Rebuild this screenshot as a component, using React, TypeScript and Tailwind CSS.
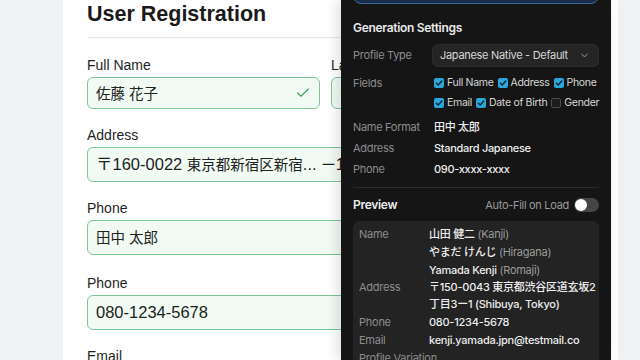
import React from "react";
import { Check, ChevronDown } from "lucide-react";

function Label({ children }: { children: React.ReactNode }) {
  return <div className="text-[14px] leading-[20px] text-[#1f1f1f]">{children}</div>;
}

function Field({ h, children, check }: { h: string; children?: React.ReactNode; check?: boolean }) {
  return (
    <div
      className={`${h} mt-[2px] flex items-center rounded-[6px] border border-[#7cc596] bg-[#f1fbf4] pl-[8px] pr-[8px] text-[16.5px] text-[#222] whitespace-nowrap overflow-hidden`}
    >
      <div className="flex-1 overflow-hidden whitespace-nowrap">{children}</div>
      {check && <Check size={16} strokeWidth={2} className="text-[#4aa96c] shrink-0" />}
    </div>
  );
}

function Cjk({ children }: { children: React.ReactNode }) {
  return <span className="text-[14.5px]">{children}</span>;
}

function Box({ on }: { on: boolean }) {
  return on ? (
    <span className="w-[10px] h-[10px] rounded-[2px] bg-[#2aa8dc] flex items-center justify-center shrink-0">
      <svg width="8" height="8" viewBox="0 0 8 8">
        <path d="M1.3 4.2 L3.2 6 L6.8 2" stroke="#0f2230" strokeWidth="1.4" fill="none" strokeLinecap="round" strokeLinejoin="round" />
      </svg>
    </span>
  ) : (
    <span className="w-[10px] h-[10px] rounded-[2px] border border-[#4a4a4a] bg-[#1b1b1b] shrink-0" />
  );
}

function CB({ on, label }: { on: boolean; label: string }) {
  return (
    <span className="flex items-center gap-[3px] whitespace-nowrap">
      <Box on={on} />
      <span>{label}</span>
    </span>
  );
}

function SRow({ label, value }: { label: string; value: string }) {
  return (
    <div className="h-[21px] flex items-center whitespace-nowrap">
      <div className="w-[81px] shrink-0 text-[#8c8c8c]">{label}</div>
      <div className="text-[#ededed] font-medium">{value}</div>
    </div>
  );
}

export default function App() {
  return (
    <div className="relative w-[640px] h-[360px] overflow-hidden bg-[#f0f1f3] flex font-[family-name:'Liberation_Sans','Noto_Sans_CJK_JP',sans-serif]">
      <div className="w-[63px] shrink-0" />
      <div className="w-[555px] shrink-0 h-full bg-white px-6">
        <div className="h-[38px] border-b border-[#e6e7e9]">
          <h1 className="text-[21.5px] leading-[28px] font-bold text-[#1a1a1a]">User Registration</h1>
        </div>
        <div className="mt-[17px] grid grid-cols-[233px_233px] gap-x-[11px]">
          <div>
            <Label>Full Name</Label>
            <Field h="h-[32px]" check>
              <Cjk>佐藤 花子</Cjk>
            </Field>
          </div>
          <div>
            <Label>Last Name (Kana)</Label>
            <Field h="h-[32px]" check>
              <Cjk>サトウ</Cjk>
            </Field>
          </div>
        </div>
        <div className="mt-[16px]">
          <Label>Address</Label>
          <Field h="h-[35px]">
            〒160-0022 <Cjk>東京都新宿区新宿</Cjk>... <Cjk>ー</Cjk>1 5
          </Field>
        </div>
        <div className="mt-[16px]">
          <Label>Phone</Label>
          <Field h="h-[35px]">
            <Cjk>田中 太郎</Cjk>
          </Field>
        </div>
        <div className="mt-[18px]">
          <Label>Phone</Label>
          <Field h="h-[35px]">080-1234-5678</Field>
        </div>
        <div className="mt-[16px]">
          <Label>Email</Label>
          <Field h="h-[35px]">hanako.sato@example.jp</Field>
        </div>
      </div>

      {/* Overlay panel */}
      <div className="absolute left-[341px] top-0 w-[270px] h-[360px] bg-[#151515] px-3 shadow-[-4px_0_12px_rgba(0,0,0,0.12)] font-[family-name:Inter,'Noto_Sans_CJK_JP',sans-serif] text-[11px] tracking-[-0.3px]">
        <div className="h-[30px] -mt-[26px] rounded-lg border border-[#3a679c] bg-[#1a2d47]" />
        <div className="mt-[16px] h-[16px] leading-[16px] text-[12px] font-semibold text-[#e8e8e8]">Generation Settings</div>
        <div className="mt-[8px] flex items-center whitespace-nowrap">
          <div className="w-[79px] shrink-0 text-[#8c8c8c]">Profile Type</div>
          <div className="flex-1 h-[23px] rounded-md border border-[#2c2c2c] bg-[#252525] flex items-center justify-between pl-[7px] pr-[8px] text-[#d6d6d6]">
            <span>Japanese Native - Default</span>
            <ChevronDown size={11} strokeWidth={2} className="text-[#a8a8a8]" />
          </div>
        </div>
        <div className="mt-[6px] flex">
          <div className="w-[81px] shrink-0 text-[#8c8c8c] leading-[20px]">Fields</div>
          <div className="flex-1 text-[#d6d6d6] text-[10.5px]">
            <div className="h-[20px] flex items-center gap-[4px]">
              <CB on label="Full Name" />
              <CB on label="Address" />
              <CB on label="Phone" />
            </div>
            <div className="h-[20px] flex items-center gap-[4px]">
              <CB on label="Email" />
              <CB on label="Date of Birth" />
              <CB on={false} label="Gender" />
            </div>
          </div>
        </div>
        <div className="mt-[4px]">
          <SRow label="Name Format" value="田中 太郎" />
          <SRow label="Address" value="Standard Japanese" />
          <SRow label="Phone" value="090-xxxx-xxxx" />
        </div>
        <div className="mt-[7px] h-px bg-[#2c2c2c]" />
        <div className="mt-[7px] h-[20px] flex items-center justify-between whitespace-nowrap">
          <span className="text-[12px] font-semibold text-[#ececec]">Preview</span>
          <span className="flex items-center gap-[5px] text-[#9a9a9a]">
            Auto-Fill on Load
            <span className="w-[25px] h-[14px] rounded-full bg-[#454545] flex items-center px-[1px]">
              <span className="w-[12px] h-[12px] rounded-full bg-white" />
            </span>
          </span>
        </div>
        <div className="mt-[6px] rounded-md bg-[#232323] pt-[4px] pl-[6px] pr-[6px] text-[11px] tracking-[-0.25px] h-[160px] whitespace-nowrap">
          <div className="flex">
            <div className="w-[70px] shrink-0 text-[#8c8c8c] leading-[18px]">Name</div>
            <div className="leading-[18px] text-[#ececec] font-medium">
              <div>山田 健二 <span className="text-[#9a9a9a] font-normal">(Kanji)</span></div>
              <div>やまだ けんじ <span className="text-[#9a9a9a] font-normal">(Hiragana)</span></div>
              <div>Yamada Kenji <span className="text-[#9a9a9a] font-normal">(Romaji)</span></div>
            </div>
          </div>
          <div className="flex">
            <div className="w-[70px] shrink-0 text-[#8c8c8c] leading-[17px]">Address</div>
            <div className="leading-[17px] text-[#ececec] font-medium">
              <div>〒150-0043 東京都渋谷区道玄坂2</div>
              <div>丁目3ー1 (Shibuya, Tokyo)</div>
            </div>
          </div>
          <div className="flex leading-[18px]">
            <div className="w-[70px] shrink-0 text-[#8c8c8c]">Phone</div>
            <div className="text-[#ececec] font-medium">080-1234-5678</div>
          </div>
          <div className="flex leading-[18px]">
            <div className="w-[70px] shrink-0 text-[#8c8c8c]">Email</div>
            <div className="text-[#ececec] font-medium">kenji.yamada.jpn@testmail.co</div>
          </div>
          <div className="flex leading-[18px]">
            <div className="text-[#8c8c8c]">Profile Variation</div>
          </div>
        </div>
      </div>
    </div>
  );
}
